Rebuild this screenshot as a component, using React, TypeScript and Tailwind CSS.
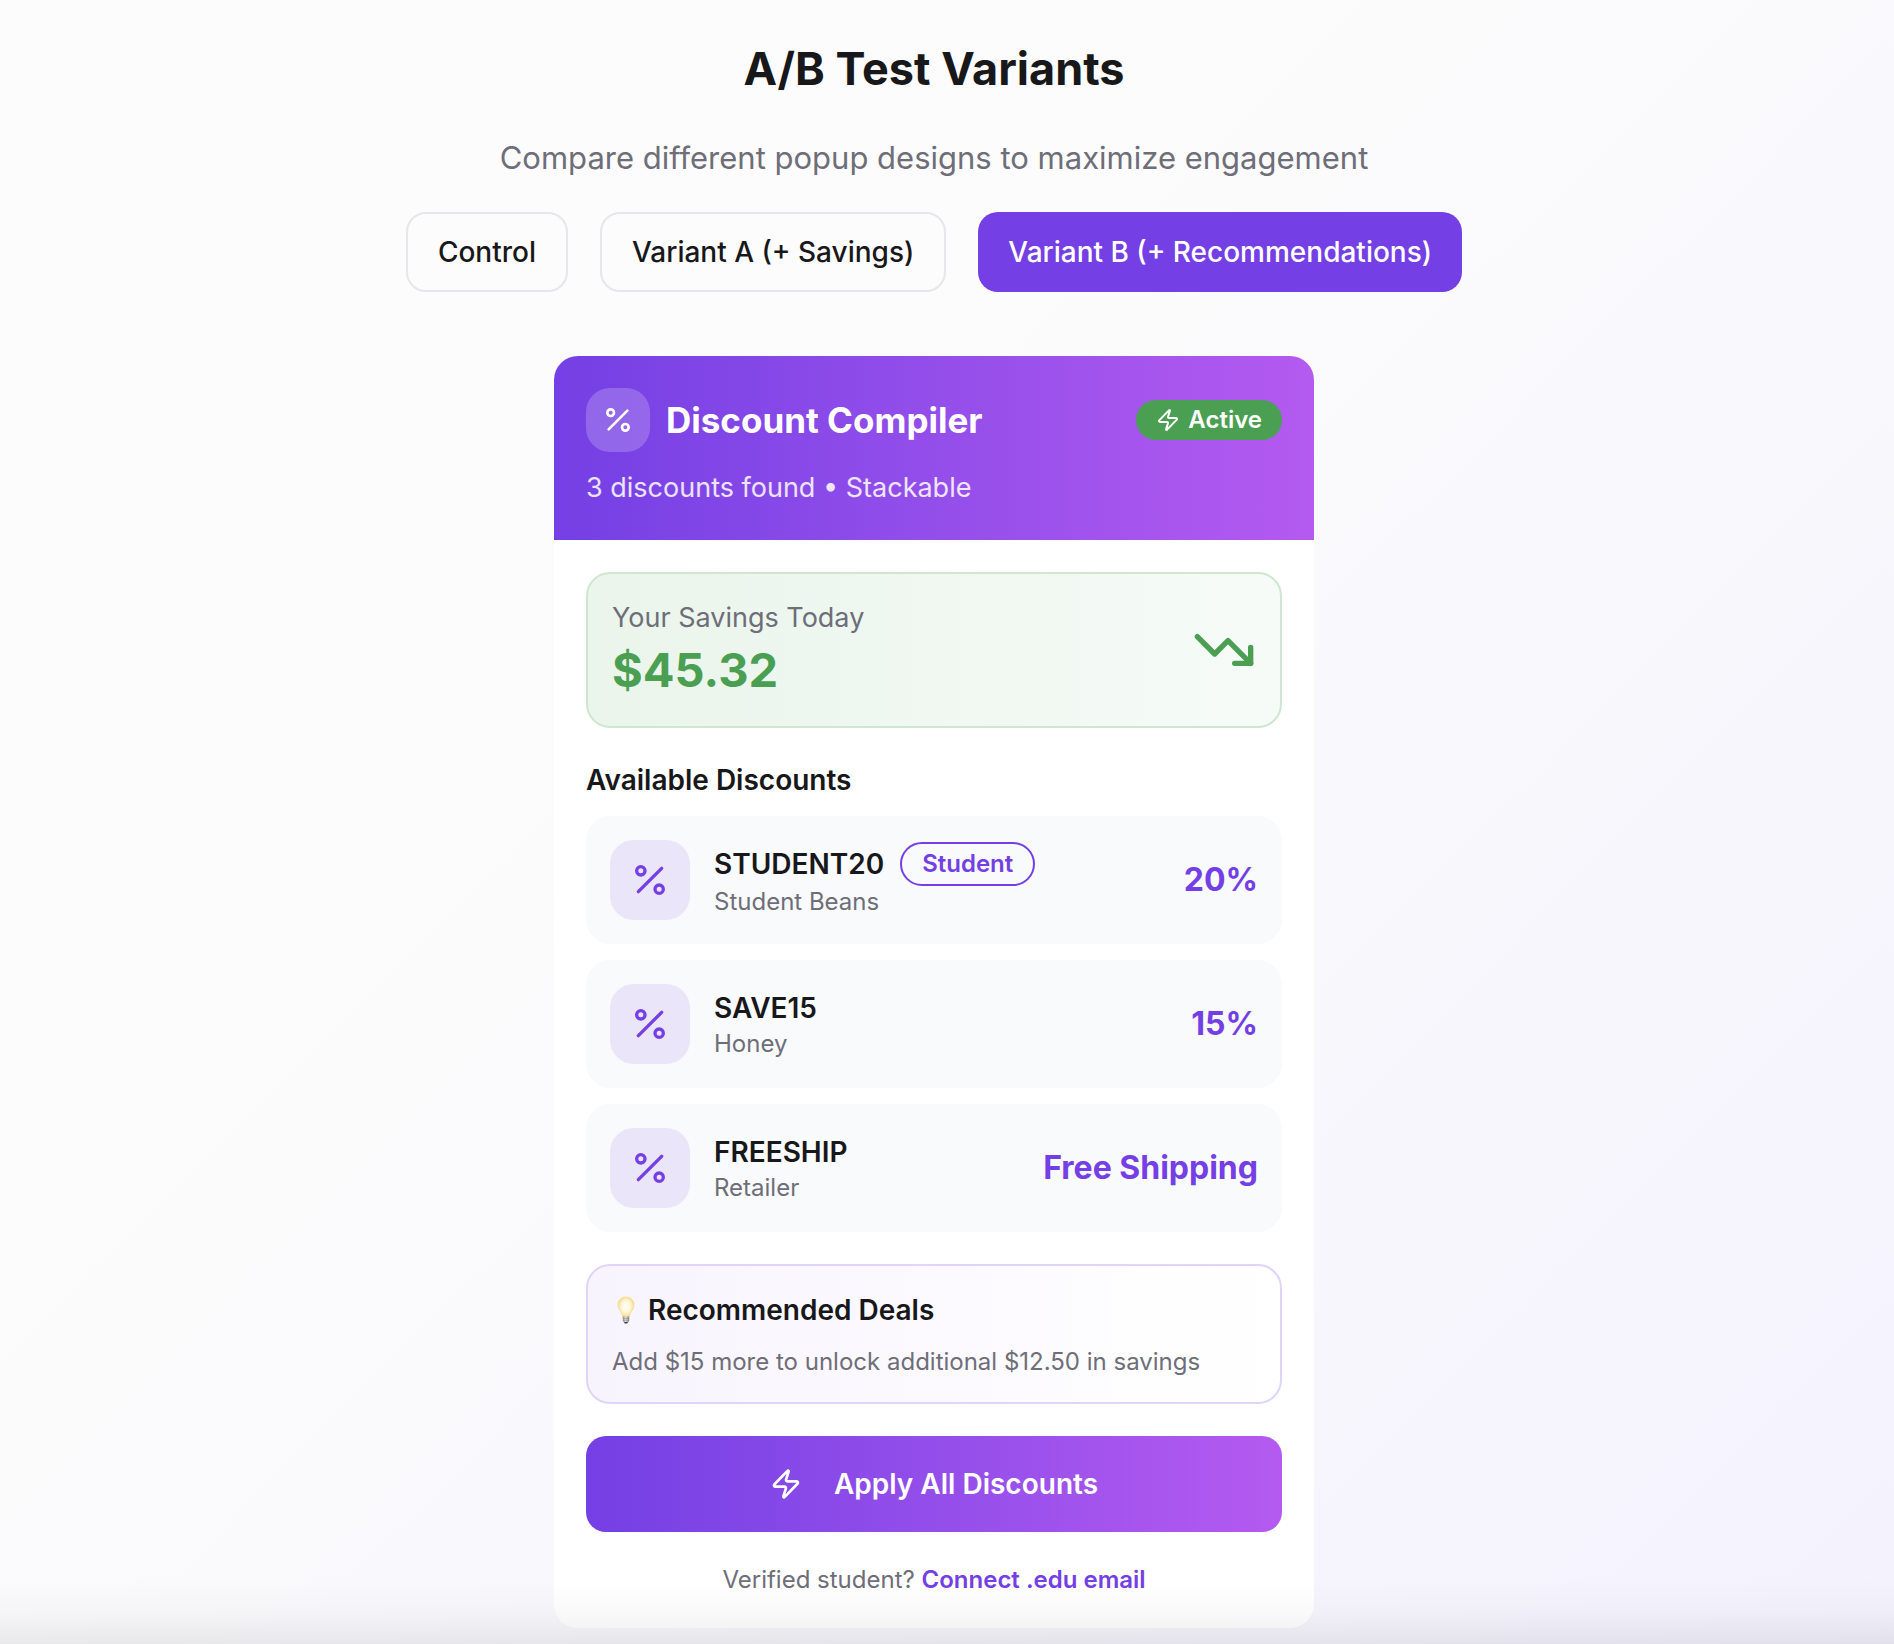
import { useState } from "react";
import { Percent, TrendingDown, Zap } from "lucide-react";

const variants = ["Control", "Variant A (+ Savings)", "Variant B (+ Recommendations)"];

const discounts = [
  { code: "STUDENT20", source: "Student Beans", value: "20%", tag: "Student" },
  { code: "SAVE15", source: "Honey", value: "15%" },
  { code: "FREESHIP", source: "Retailer", value: "Free Shipping" },
];

function Bulb() {
  return (
    <svg viewBox="0 0 28 32" className="h-8 w-7 shrink-0" aria-hidden="true">
      <defs>
        <radialGradient id="glass" cx="50%" cy="48%" r="55%">
          <stop offset="0" stopColor="#fffef6" />
          <stop offset="0.5" stopColor="#fef8da" />
          <stop offset="1" stopColor="#f4d680" />
        </radialGradient>
        <linearGradient id="base" x1="0" x2="1">
          <stop offset="0" stopColor="#8b8b8b" />
          <stop offset="0.45" stopColor="#dedede" />
          <stop offset="1" stopColor="#7c7c7c" />
        </linearGradient>
      </defs>
      <path
        d="M14 3c-4.600 0-8 3.400-8 7.800 0 3 1.500 5 2.900 7.200 1.100 1.700 1.500 3.200 1.800 5h6.600c.3-1.800.7-3.300 1.800-5C20.500 15.800 22 13.800 22 10.800 22 6.400 18.600 3 14 3z"
        fill="url(#glass)"
        stroke="#f0d789"
        strokeWidth="0.6"
      />
      <path d="M10.800 22.500h6.400v4.300c0 .8-1 1.500-1.700 1.500h-3c-.7 0-1.700-.7-1.700-1.500z" fill="url(#base)" />
      <path d="M10.900 24.500h6.200M11 26.400h6" stroke="#8f8f8f" strokeWidth="0.500" />
      <path d="M12 28h4l-.8 1.600h-2.400z" fill="#3c3c3c" />
    </svg>
  );
}

export default function App() {
  const [active, setActive] = useState(2);

  return (
    <main className="min-h-screen bg-linear-135 from-[#fcfcfc] from-35% to-[#f4f2fd] pt-9 pr-[26px] pb-4 font-['Inter',sans-serif] text-[#18181b]">
      <header className="flex flex-col items-center text-center">
        <h1 className="text-[45px] leading-[66px] font-bold">A/B Test Variants</h1>
        <p className="mt-[34px] text-[31px] leading-[44px] text-[#6e6e78]">
          Compare different popup designs to maximize engagement
        </p>
        <div className="mt-8 flex flex-wrap justify-center gap-8">
          {variants.map((name, i) => (
            <button
              key={name}
              type="button"
              aria-pressed={active === i}
              onClick={() => setActive(i)}
              className={
                active === i
                  ? "h-20 rounded-[20px] bg-[#743fe4] px-[30px] text-[28px] font-medium text-white"
                  : "h-20 rounded-[20px] border-2 border-[#e6e6eb] px-[30px] text-[28px] font-medium"
              }
            >
              {name}
            </button>
          ))}
        </div>
      </header>

      <section className="mx-auto mt-16 w-full max-w-[760px] overflow-hidden rounded-3xl bg-white">
        <div className="bg-linear-to-r from-[#743fe4] to-[#b45af0] p-8 text-white">
          <div className="flex items-center justify-between">
            <div className="flex items-center gap-4">
              <div className="flex size-16 items-center justify-center rounded-3xl bg-white/20">
                <Percent size={32} />
              </div>
              <h2 className="text-[35px] leading-[48px] font-bold">Discount Compiler</h2>
            </div>
            <span className="flex h-10 items-center gap-2 rounded-full bg-[#4b9f52] px-5 text-[24px] font-semibold">
              <Zap size={24} />
              Active
            </span>
          </div>
          <p className="mt-4 text-[27px] leading-10 text-white/85">3 discounts found • Stackable</p>
        </div>

        <div className="p-8">
          <div className="flex items-center justify-between rounded-3xl border-2 border-[#cfe6d1] bg-linear-to-r from-[#eaf5eb] to-[#f6fbf7] p-6">
            <div>
              <p className="text-[27px] leading-10 text-[#6e6e78]">Your Savings Today</p>
              <p className="text-[47px] leading-[64px] font-bold text-[#4b9f52]">$45.32</p>
            </div>
            <TrendingDown size={64} className="text-[#4b9f52]" />
          </div>

          <h3 className="mt-8 text-[28px] leading-10 font-semibold">Available Discounts</h3>
          <ul className="mt-4 flex flex-col gap-4">
            {discounts.map((d) => (
              <li key={d.code} className="flex h-32 items-center gap-6 rounded-3xl bg-[#f9fafc] px-6">
                <div className="flex size-20 items-center justify-center rounded-3xl bg-[#ebe5fa] text-[#743fe4]">
                  <Percent size={40} />
                </div>
                <div className="flex-1">
                  <div className="flex items-center gap-4">
                    <span className="text-[28px] leading-10 font-semibold">{d.code}</span>
                    {d.tag && (
                      <span className="flex h-11 items-center rounded-full border-2 border-[#743fe4] px-5 text-[24px] font-semibold text-[#743fe4]">
                        {d.tag}
                      </span>
                    )}
                  </div>
                  <p className="text-[24px] leading-8 text-[#6e6e78]">{d.source}</p>
                </div>
                <span className="text-[32px] font-bold text-[#743fe4]">{d.value}</span>
              </li>
            ))}
          </ul>

          <div className="mt-8 rounded-3xl border-2 border-[#dfd5f9] bg-linear-to-r from-[#f8f4fe] to-white p-6">
            <h3 className="flex items-center gap-2 text-[28px] leading-10 font-semibold">
              <Bulb />
              Recommended Deals
            </h3>
            <p className="mt-4 text-[24px] leading-8 text-[#6e6e78]">
              Add $15 more to unlock additional $12.50 in savings
            </p>
          </div>

          <button
            type="button"
            className="mt-8 flex h-24 w-full items-center justify-center gap-8 rounded-[20px] bg-linear-to-r from-[#743fe4] to-[#b45af0] text-[28px] font-semibold text-white"
          >
            <Zap size={32} />
            Apply All Discounts
          </button>

          <p className="mt-8 text-center text-[24px] leading-8 text-[#6e6e78]">
            Verified student?{" "}
            <a href="#connect" className="font-semibold text-[#743fe4]">
              Connect .edu email
            </a>
          </p>
        </div>
      </section>

      <div className="pointer-events-none fixed inset-x-0 bottom-0 h-16 bg-linear-to-b from-transparent via-black/2 to-black/7" />
    </main>
  );
}
